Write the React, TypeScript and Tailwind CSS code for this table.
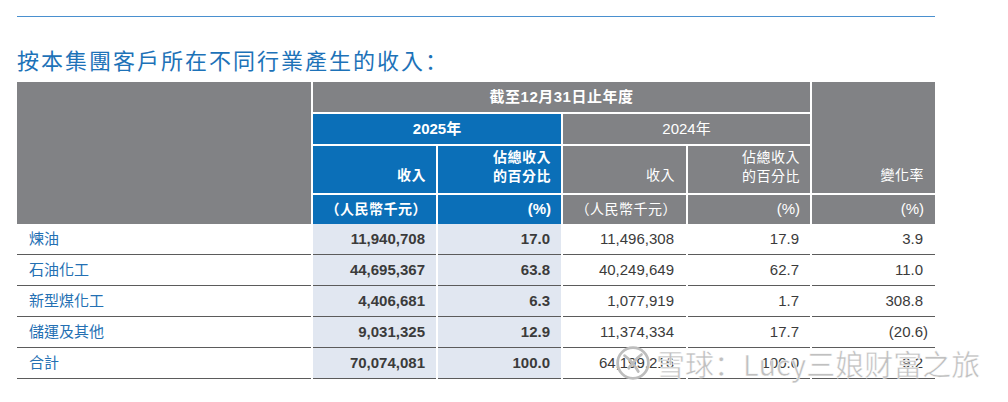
const FONT = '"Liberation Sans", "Noto Sans CJK TC", sans-serif'

type Row = {
  label: string
  rev25: string
  pct25: string
  rev24: string
  pct24: string
  change: string
}

const ROWS: Row[] = [
  { label: '煉油', rev25: '11,940,708', pct25: '17.0', rev24: '11,496,308', pct24: '17.9', change: '3.9' },
  { label: '石油化工', rev25: '44,695,367', pct25: '63.8', rev24: '40,249,649', pct24: '62.7', change: '11.0' },
  { label: '新型煤化工', rev25: '4,406,681', pct25: '6.3', rev24: '1,077,919', pct24: '1.7', change: '308.8' },
  { label: '儲運及其他', rev25: '9,031,325', pct25: '12.9', rev24: '11,374,334', pct24: '17.7', change: '(20.6)' },
  { label: '合計', rev25: '70,074,081', pct25: '100.0', rev24: '64,199,216', pct24: '100.0', change: '9.2' },
]

const COLS = 'grid-cols-[294px_123px_123px_123px_122px_123px]'

function XueqiuLogo() {
  return (
    <svg width="36" height="36" viewBox="0 0 34 34" fill="none" stroke="#bdbdbd" strokeWidth="2.6" strokeLinecap="round">
      <circle cx="17" cy="17" r="14.5" />
      <path d="M9 10c4 3 9 8 13 15" />
      <path d="M25 9c-3 2-6 5-8 8" />
      <path d="M13 22c1-2 2-3 4-5" />
    </svg>
  )
}

export default function App() {
  return (
    <div className="relative h-[402px] w-[1008px] overflow-hidden bg-white" style={{ fontFamily: FONT }}>
      <div className="pl-[17px] pt-[16px]">
        <div className="w-[918px] border-t border-[#4a90cf]" />
        <h2 className="mt-[27px] h-[30px] text-[22px] leading-[30px] tracking-[2px] text-[#1d72b8]">
          按本集團客戶所在不同行業產生的收入
          <span style={{ fontFamily: '"Noto Sans CJK SC", sans-serif' }}>：</span>
        </h2>

        <div className="mt-[8px] w-[918px]">
          {/* header block */}
          <div className={`grid ${COLS} grid-rows-[30px_30px_47px_29px] gap-[2px] bg-white text-[14px] tracking-[0.5px] text-white`}>
            <div className="col-start-1 row-span-4 row-start-1 bg-[#818285]" />
            <div className="col-span-4 col-start-2 row-start-1 flex items-center justify-center bg-[#818285] text-[15px] font-bold tracking-[0.5px]">
              截至12月31日止年度
            </div>
            <div className="col-start-6 row-span-3 row-start-1 flex items-end justify-end bg-[#818285] pb-[7px] pr-[11px]">
              變化率
            </div>
            <div className="col-span-2 col-start-2 row-start-2 flex items-center justify-center bg-[#0b6fb8] text-[15px] font-bold tracking-normal">
              2025年
            </div>
            <div className="col-span-2 col-start-4 row-start-2 flex items-center justify-center bg-[#818285] text-[15px] tracking-normal">
              2024年
            </div>

            <div className="col-start-2 row-start-3 flex items-end justify-end bg-[#0b6fb8] pb-[7px] pr-[10px] font-bold">收入</div>
            <div className="col-start-3 row-start-3 flex flex-col items-end justify-end bg-[#0b6fb8] pb-[7px] pr-[10px] font-bold leading-[19px]">
              <span>佔總收入</span>
              <span>的百分比</span>
            </div>
            <div className="col-start-4 row-start-3 flex items-end justify-end bg-[#818285] pb-[7px] pr-[11px]">收入</div>
            <div className="col-start-5 row-start-3 flex flex-col items-end justify-end bg-[#818285] pb-[7px] pr-[10px] leading-[19px]">
              <span>佔總收入</span>
              <span>的百分比</span>
            </div>

            <div className="col-start-2 row-start-4 flex items-center justify-end bg-[#0b6fb8] pr-[9px] font-bold tracking-[0.5px]">（人民幣千元）</div>
            <div className="col-start-3 row-start-4 flex items-center justify-end bg-[#0b6fb8] pr-[10px] text-[15px] font-bold tracking-normal">(%)</div>
            <div className="col-start-4 row-start-4 flex items-center justify-end bg-[#818285] pr-[9px] tracking-[0.5px]">（人民幣千元）</div>
            <div className="col-start-5 row-start-4 flex items-center justify-end bg-[#818285] pr-[10px] text-[15px] tracking-normal">(%)</div>
            <div className="col-start-6 row-start-4 flex items-center justify-end bg-[#818285] pr-[11px] text-[15px] tracking-normal">(%)</div>
          </div>

          {/* body rows */}
          <div className={`grid ${COLS} gap-x-[2px] text-[15px] text-[#3b3b3b]`}>
            {ROWS.map((r) => (
              <div key={r.label} className="contents">
                <div className="flex h-[31px] items-center border-b border-[#5b5b5b] pl-[12px] text-[#2470b3]">{r.label}</div>
                <div className="flex h-[31px] items-center justify-end border-b border-[#5b5b5b] bg-[#e1e7f1] pr-[11px] font-bold">{r.rev25}</div>
                <div className="flex h-[31px] items-center justify-end border-b border-[#5b5b5b] bg-[#e1e7f1] pr-[11px] font-bold">{r.pct25}</div>
                <div className="flex h-[31px] items-center justify-end border-b border-[#5b5b5b] pr-[12px]">{r.rev24}</div>
                <div className="flex h-[31px] items-center justify-end border-b border-[#5b5b5b] pr-[11px]">{r.pct24}</div>
                <div className="flex h-[31px] items-center justify-end border-b border-[#5b5b5b] pr-[12px]">
                  <span className={r.change.startsWith('(') ? 'mr-[-5px]' : ''}>{r.change}</span>
                </div>
              </div>
            ))}
          </div>
        </div>
      </div>

      {/* watermark */}
      <div className="pointer-events-none absolute left-[615px] top-[344px] flex items-center gap-[5px]">
        <XueqiuLogo />
        <span
          className="text-[29px] leading-[38px] text-[#c0c0c0]"
          style={{ fontFamily: '"Noto Sans CJK SC", sans-serif', WebkitTextStroke: '0.5px #ffffff' }}
        >
          雪球：Lucy三娘财富之旅
        </span>
      </div>
    </div>
  )
}
